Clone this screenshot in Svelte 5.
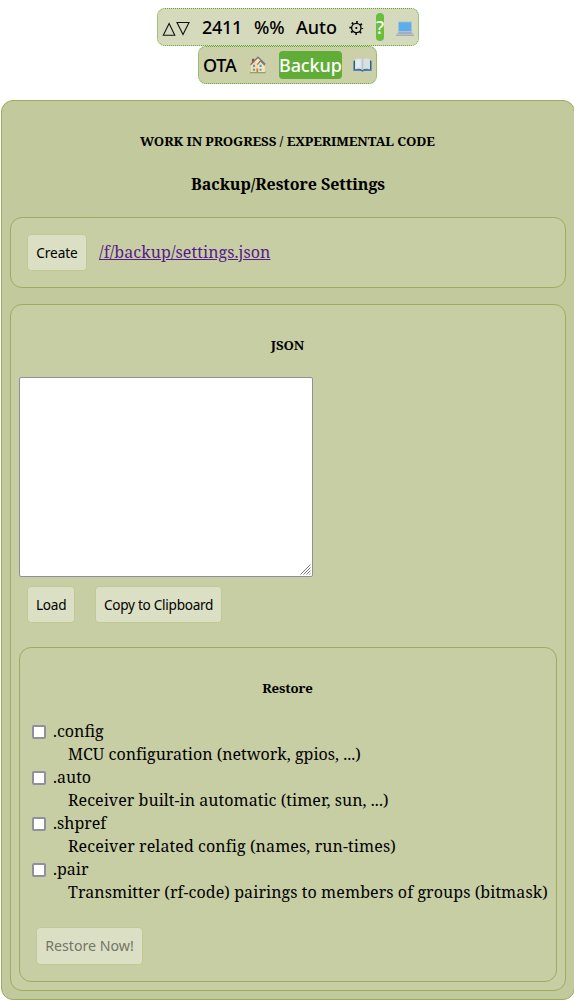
<script>
  const options = [
    { name: '.config', info: 'MCU configuration (network, gpios, ...)', tracking: 0.015 },
    { name: '.auto', info: 'Receiver built-in automatic (timer, sun, ...)', tracking: 0.05 },
    { name: '.shpref', info: 'Receiver related config (names, run-times)', tracking: 0.1 },
    { name: '.pair', info: 'Transmitter (rf-code) pairings to members of groups (bitmask)', tracking: 0.08 }
  ];
</script>

<nav>
  <div class="bar first">
    <svg class="arrows" width="28" height="18" viewBox="0 0 28 18" fill="none" stroke="#111" stroke-width="1.1"><path d="M1.300 17.300 7.100 5.400l5.700 11.900zM15 4.500h12l-6 12z" /></svg>
    <span class="n2411">2411</span>
    <span class="pct">%%</span>
    <span class="auto">Auto</span>
    <svg class="gear" width="15" height="16" viewBox="0 0 15 16" fill="none" stroke="#000"><circle cx="7.300" cy="9" r="4.700" stroke-width="1.300" /><circle cx="7.300" cy="9" r="6" stroke-width="1.800" stroke-dasharray="1.700 3.012" stroke-dashoffset=".85" /><circle cx="7.300" cy="9" r="1.100" fill="#000" stroke="none" /></svg>
    <span class="help">?</span>
    <svg class="laptop" width="18" height="17" viewBox="0 0 18 17"><path fill="#b4c0c9" d="M2 3.200q0-.7.700-.7h12.600q.7 0 .7.700V13H2z" /><path fill="#5aaeee" d="M2.900 3.400h12.200V12H2.900z" /><path fill="#b3bfca" d="M2 13h14l2 3H0z" /><path fill="#909fad" d="M3 13.600h12l.6 1H2.400z" /><path fill="#a0afbd" d="M0 16h18v1H0z" /></svg>
  </div>
  <div class="bar second">
    <span class="ota">OTA</span>
    <svg class="house" width="18" height="18" viewBox="0 0 18 18"><path fill="#8aa960" d="M1 15.800h15.800v1.500H1z" /><path fill="#fae3b5" d="M2 8.500 5.500 5l3.500-3.500 6.800 6V16H2z" /><path fill="#f3d49d" d="M2.300 8.500 5.500 5l3.700 3.800V16H2.300z" opacity=".55" /><path fill="#b33b3d" d="M3 2.800h2.200v3.700H3z" /><path fill="none" stroke="#77797a" stroke-width="1.300" d="M1.500 8.800 9 1.200l7.200 6.900M8.400 8.600l3.100-3.700 4.300 4.300" /><path fill="#4b9ed4" d="M4 8.700h2V11H4zM10.600 8.700h2V11h-2zM4 12.700h2v2.100H4zM10.600 12.700h2v2.100h-2z" /><path fill="#c87956" d="M7.400 12.500h1.800V16H7.400z" /></svg>
    <span class="backup">Backup</span>
    <svg class="book" width="19" height="16" viewBox="0 0 19 16"><path fill="#266092" d="M.5 4 2.500 3h14l2 1v10h-7.800l-1.200.8-1.200-.8H.5z" /><path fill="#d9e0e5" d="M2 2.200Q6.500.3 9.500 2.800 12.500.3 17 2.200v10q-4.500-1.200-7.500.8-3-2-7.500-.8z" /><path fill="#b8c4cd" d="M8.700 2.200 9.500 2.800l.8-.6v10.400l-.8.4-.8-.4z" /><path fill="#f0f3f5" d="M3 3q3-1 4.500-.2v8q-2-.5-4.500 0z" opacity=".55" /><path fill="#f6f8f9" d="M1 12.800q5-1 7.700.6h1.600q2.700-1.600 7.700-.6v.7h-7.500l-1 .5-1-.5H1z" opacity=".45" /></svg>
  </div>
</nav>

<main>
  <h5>WORK IN PROGRESS / EXPERIMENTAL CODE</h5>
  <h4>Backup/Restore Settings</h4>
  <section class="create">
    <button>Create</button>
    <a href="/f/backup/settings.json">/f/backup/settings.json</a>
  </section>
  <section class="json">
    <h5>JSON</h5>
    <div class="editor">
      <textarea spellcheck="false"></textarea>
      <svg class="grip" width="11" height="11" viewBox="0 0 11 11" stroke="#777" fill="none"><path d="M.5 10.500l10-10M3.500 10.500l7-7M6.500 10.500l4-4M9.500 10.500l1-1" /></svg>
    </div>
    <div class="actions">
      <button class="load">Load</button>
      <button class="copy">Copy to Clipboard</button>
    </div>
    <section class="restore">
      <h5>Restore</h5>
      <dl>
        {#each options as o}
          <dt><label><input type="checkbox" /><span>{o.name}</span></label></dt>
          <dd style:letter-spacing="{o.tracking}px">{o.info}</dd>
        {/each}
      </dl>
      <button class="now" disabled>Restore Now!</button>
    </section>
  </section>
</main>

<style>
  :global(body) { margin: 0; background: #fff; overflow: hidden; }
  :global(#app) {
    box-sizing: border-box;
    width: 575px;
    padding: 8px 0 0 1px;
    font: 16px/23px "Noto Serif", "Droid Serif", "DejaVu Serif Condensed", "DejaVu Serif", serif;
    color: #000;
  }
  nav { display: flex; flex-direction: column; align-items: center; }
  .bar {
    box-sizing: border-box;
    display: flex;
    align-items: center;
    height: 38px;
    border: 1px dotted #60ad37;
    border-radius: 8px;
    font: 500 18px/28px "Noto Sans", sans-serif;
    letter-spacing: -0.2px;
    white-space: nowrap;
  }
  .bar svg { display: block; flex: none; }
  .first { width: 262px; padding-left: 4px; background: #d6dabd; }
  .second { width: 179px; margin-right: 1px; padding-left: 4px; background: #cbd0a9; }
  .arrows { margin-right: 12px; }
  .n2411 { width: 40px; margin-right: 12px; letter-spacing: -0.3px; }
  .pct { width: 30px; margin-right: 12px; }
  .auto { width: 41px; margin-right: 12px; letter-spacing: 0; }
  .gear { margin-right: 12px; }
  .help { width: 8px; margin-right: 12px; border-radius: 4px; background: #69be3c; color: #fff; }
  .ota { width: 34px; margin-right: 12px; }
  .house { margin-right: 12px; }
  .backup { width: 63px; margin-right: 11px; border-radius: 4px; background: #60ad37; color: #fff; letter-spacing: -0.1px; }
  main, section { box-sizing: border-box; border: 1px solid #9dab60; border-radius: 12px; }
  main { width: 574px; height: 900px; margin-top: 16px; padding: 0 8px; background: #c2c99c; overflow: hidden; }
  section { background: #c8cea4; }
  h5, h4 { margin: 0; text-align: center; font-weight: 700; white-space: nowrap; }
  h5 { font-size: 13.28px; line-height: 18px; letter-spacing: -0.11px; text-indent: -1px; }
  h4 { font-size: 16px; line-height: 22px; letter-spacing: -0.05px; }
  main > h5 { padding-top: 31px; }
  main > h4 { padding-top: 23px; }
  .create { display: flex; align-items: center; height: 71px; margin-top: 22px; padding-left: 16px; }
  a { margin-left: 12px; color: #551a8b; text-decoration: underline; letter-spacing: 0.08px; }
  button {
    box-sizing: border-box;
    height: 37px;
    padding: 0 8px;
    border: 1px solid #c1c894;
    border-radius: 4px;
    background: #dbdfc3;
    color: #000;
    font: 13.6px/18px "Noto Sans", sans-serif;
    letter-spacing: -0.28px;
    white-space: nowrap;
  }
  .create button { width: 60px; letter-spacing: -0.05px; }
  .json { height: 687px; margin-top: 16px; padding: 31px 8px 0; }
  .editor { position: relative; width: 294px; height: 200px; margin-top: 23px; }
  textarea {
    display: block;
    box-sizing: border-box;
    width: 294px;
    height: 200px;
    margin: 0;
    border: 1px solid #8f8f9d;
    border-radius: 2px;
    background: #fff;
    resize: none;
    outline: none;
  }
  .grip { position: absolute; right: 2px; bottom: 2px; }
  .actions { display: flex; gap: 20px; padding: 9px 8px 0; }
  .load { width: 48px; }
  .copy { width: 127px; }
  .restore { height: 335px; margin-top: 24px; padding: 31px 8px 0 12px; }
  .restore h5 { margin-left: -4px; }
  dl { margin: 23px 0 0; }
  dt, dd { height: 23px; line-height: 23px; white-space: nowrap; }
  dd { margin: 0 0 0 36px; }
  label { display: flex; align-items: center; gap: 7px; }
  input {
    appearance: none;
    box-sizing: border-box;
    width: 14px;
    height: 14px;
    margin: 1px 0 0;
    border: 2px solid #8f8f9d;
    border-radius: 2px;
    background: #fff;
  }
  .now { display: block; width: 107px; height: 38px; margin: 23px 0 0 4px; color: #747669; font-size: 14.2px; letter-spacing: 0; }
</style>
